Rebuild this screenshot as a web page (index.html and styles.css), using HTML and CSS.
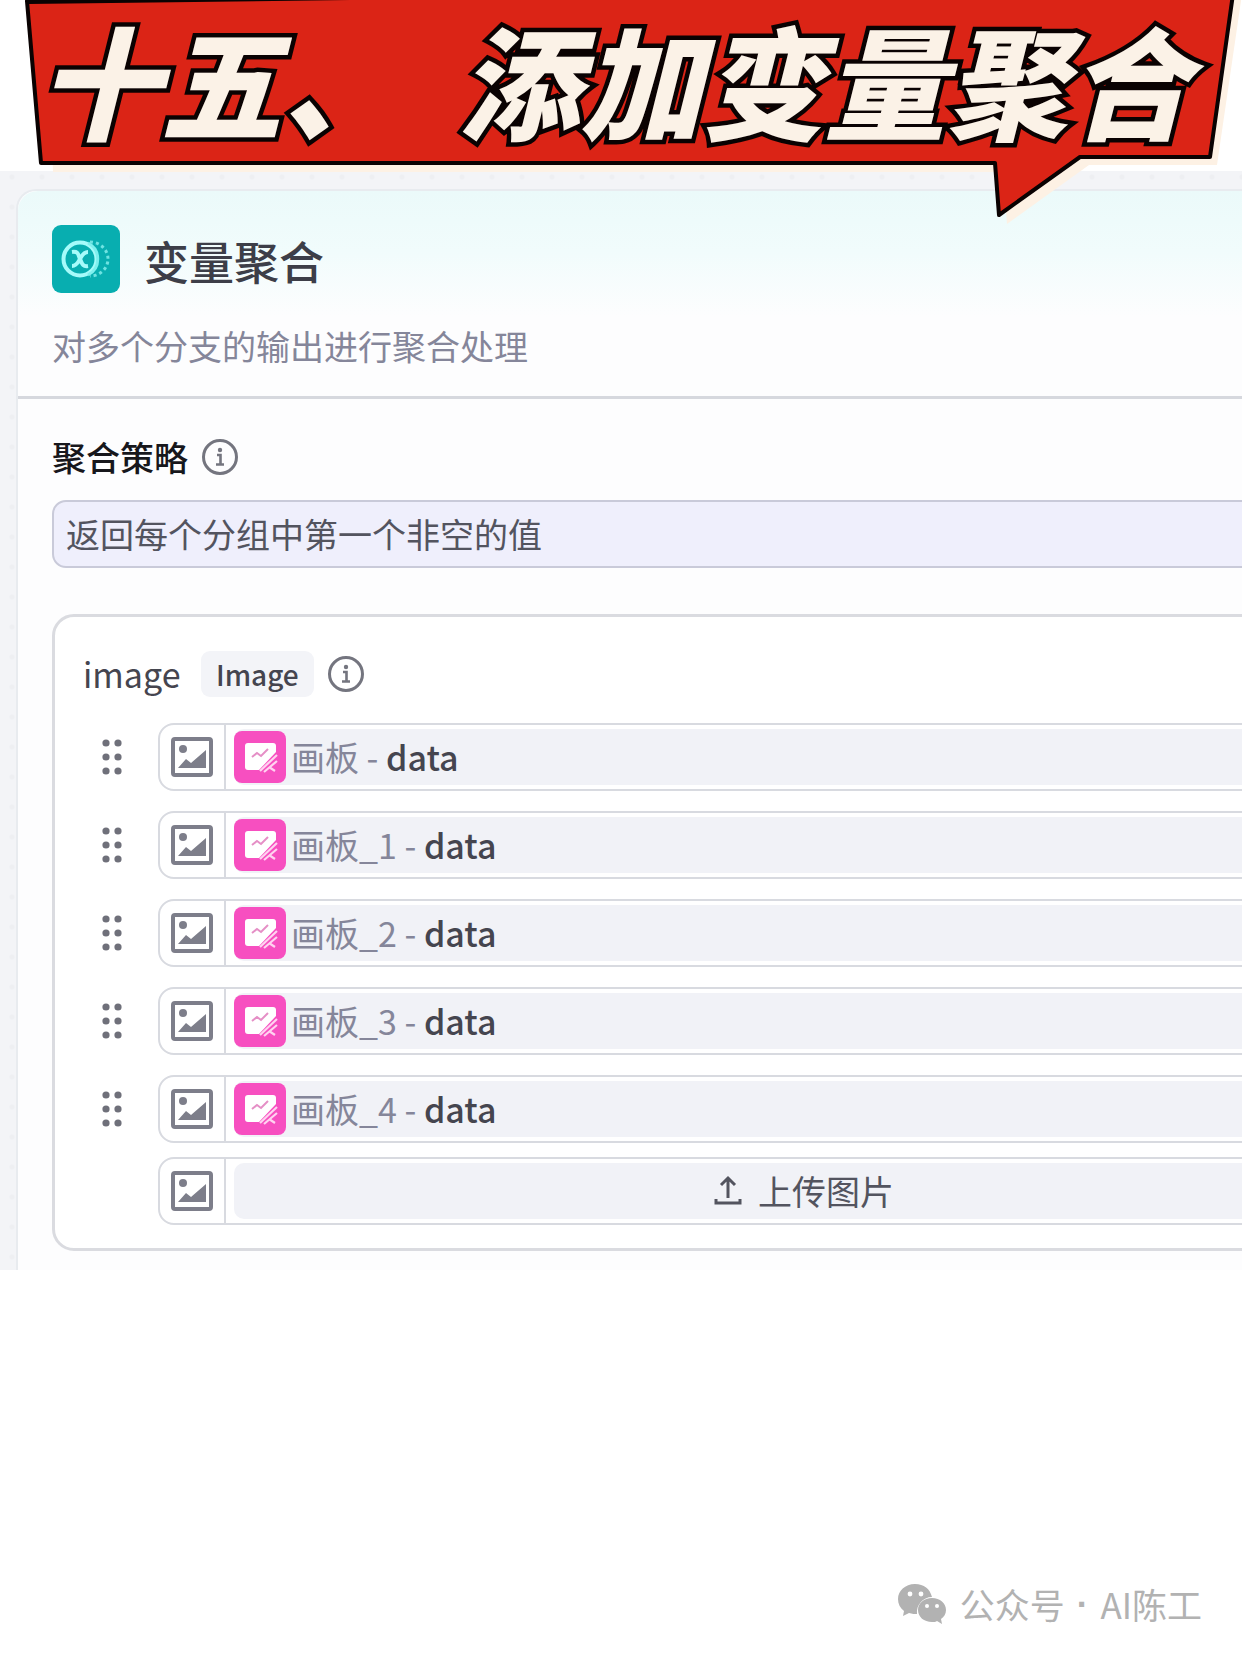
FILE: index.html
```html
<!DOCTYPE html>
<html lang="zh-CN">
<head>
    <meta charset="UTF-8">
    <meta name="viewport" content="width=device-width, initial-scale=1.0">
    <title>添加变量聚合</title>
    <link rel="stylesheet" href="styles.css">
</head>
<body>
    <!-- shared icons -->
    <svg width="0" height="0" class="sprite" aria-hidden="true">
        <symbol id="info" viewBox="0 0 38 38">
            <circle cx="19" cy="19" r="16.5" fill="none" stroke="currentColor" stroke-width="3"/>
            <circle cx="19" cy="12" r="2.2" fill="currentColor"/>
            <path d="M16 17h3.5v9M15 26.5h8" fill="none" stroke="currentColor" stroke-width="2.6"/>
        </symbol>
        <symbol id="drag" viewBox="0 0 20 36">
            <g fill="currentColor">
                <circle cx="4" cy="4" r="3.6"/><circle cx="16" cy="4" r="3.6"/>
                <circle cx="4" cy="18" r="3.6"/><circle cx="16" cy="18" r="3.6"/>
                <circle cx="4" cy="32" r="3.6"/><circle cx="16" cy="32" r="3.6"/>
            </g>
        </symbol>
        <symbol id="picture" viewBox="0 0 42 40">
            <rect x="2" y="2" width="38" height="36" rx="2" fill="none" stroke="currentColor" stroke-width="4"/>
            <circle cx="12" cy="12" r="4" fill="currentColor"/>
            <path d="M7 31l8-9 5 4 15-13v18z" fill="currentColor"/>
        </symbol>
        <symbol id="board" viewBox="0 0 52 52">
            <rect width="52" height="52" rx="8" fill="#f74fc0"/>
            <path d="M14 12h25a3 3 0 0 1 3 3v6L25 39H14a3 3 0 0 1-3-3V15a3 3 0 0 1 3-3z" fill="#fff"/>
            <path d="M18 26l5-4 4 3 7-7" fill="none" stroke="#e58fc6" stroke-width="2"/>
            <path d="M26 40l17-16M30 41l13-11M35 36l6 4" fill="none" stroke="#ffd3f0" stroke-width="2.2"/>
        </symbol>
    </svg>

    <header class="banner">
        <svg class="bubble" viewBox="0 0 1242 230" aria-hidden="true">
            <path d="M47 -6L53 172H1003L1007 224L1089 165H1217L1242 -6z" fill="#fdf1e4"/>
            <path d="M27 1L41 163H995L999 215L1080 157H1210L1233 -6H350z" fill="#db2416" stroke="#0a0202" stroke-width="4" stroke-linejoin="round"/>
            <path d="M26 0H350L28 4z" fill="#0a0202"/>
        </svg>
        <h1><span>十五、</span><span>添加变量聚合</span></h1>
    </header>

    <main class="canvas">
        <section class="node">
            <div class="node-head">
                <div class="node-title">
                    <svg class="node-icon" viewBox="0 0 68 68" aria-hidden="true">
                        <rect width="68" height="68" rx="9" fill="#08aeb0"/>
                        <circle cx="28" cy="34" r="16.5" fill="none" stroke="#a5fbfa" stroke-width="4"/>
                        <path d="M20 27c7-1 6 3 8 7s2 8 8 7M36 27c-5 0-6 4-8 7s-3 7-8 7" fill="none" stroke="#a5fbfa" stroke-width="4"/>
                        <path d="M36 18a18 18 0 0 1 0 32" fill="none" stroke="#7ff0ee" stroke-width="3"/>
                        <path d="M38 17a18 17 0 0 1 0 34" fill="none" stroke="#6fe3e2" stroke-width="3" stroke-dasharray="3 3"/>
                    </svg>
                    <h2>变量聚合</h2>
                </div>
                <p>对多个分支的输出进行聚合处理</p>
            </div>

            <div class="node-body">
                <div class="label-row">
                    <label for="strategy">聚合策略</label>
                    <svg class="info"><use href="#info"/></svg>
                </div>
                <select id="strategy" class="strategy">
                    <option>返回每个分组中第一个非空的值</option>
                </select>

                <div class="group">
                    <div class="group-head">
                        <span class="group-name">image</span>
                        <span class="tag">Image</span>
                        <svg class="info"><use href="#info"/></svg>
                    </div>
                    <ul class="vars">
                        <li>
                            <button class="drag" aria-label="排序"><svg><use href="#drag"/></svg></button>
                            <div class="var">
                                <span class="type"><svg><use href="#picture"/></svg></span>
                                <button class="value"><svg><use href="#board"/></svg><span>画板 - <b>data</b></span></button>
                            </div>
                        </li>
                        <li>
                            <button class="drag" aria-label="排序"><svg><use href="#drag"/></svg></button>
                            <div class="var">
                                <span class="type"><svg><use href="#picture"/></svg></span>
                                <button class="value"><svg><use href="#board"/></svg><span>画板_1 - <b>data</b></span></button>
                            </div>
                        </li>
                        <li>
                            <button class="drag" aria-label="排序"><svg><use href="#drag"/></svg></button>
                            <div class="var">
                                <span class="type"><svg><use href="#picture"/></svg></span>
                                <button class="value"><svg><use href="#board"/></svg><span>画板_2 - <b>data</b></span></button>
                            </div>
                        </li>
                        <li>
                            <button class="drag" aria-label="排序"><svg><use href="#drag"/></svg></button>
                            <div class="var">
                                <span class="type"><svg><use href="#picture"/></svg></span>
                                <button class="value"><svg><use href="#board"/></svg><span>画板_3 - <b>data</b></span></button>
                            </div>
                        </li>
                        <li>
                            <button class="drag" aria-label="排序"><svg><use href="#drag"/></svg></button>
                            <div class="var">
                                <span class="type"><svg><use href="#picture"/></svg></span>
                                <button class="value"><svg><use href="#board"/></svg><span>画板_4 - <b>data</b></span></button>
                            </div>
                        </li>
                    </ul>
                    <div class="var upload-row">
                        <span class="type"><svg><use href="#picture"/></svg></span>
                        <button class="upload">
                            <svg viewBox="0 0 28 32" aria-hidden="true">
                                <path d="M14 23V4M7 10l7-7 7 7M2 24v4h24v-4" fill="none" stroke="currentColor" stroke-width="3"/>
                            </svg>
                            上传图片
                        </button>
                    </div>
                </div>
            </div>
        </section>
    </main>

    <footer class="account">
        <svg viewBox="0 0 50 40" aria-hidden="true">
            <path d="M17 0C7 0 0 7 0 15c0 5 2 9 6 12l-1 5 6-3c3 1 6 1 8 1-1-9 6-17 15-17C32 5 26 0 17 0z" fill="#b2b2b2"/>
            <path d="M34 14c-8 0-14 5-14 12s6 12 14 12c2 0 4 0 5-1l5 3-1-5c3-2 5-5 5-9 0-7-6-12-14-12z" fill="#b2b2b2"/>
            <g fill="#fff">
                <circle cx="12" cy="10" r="2.4"/><circle cx="23" cy="10" r="2.4"/>
                <circle cx="29" cy="22" r="2"/><circle cx="39" cy="22" r="2"/>
            </g>
        </svg>
        <span>公众号</span>
        <b class="dot">·</b>
        <span>AI陈工</span>
    </footer>
</body>
</html>
```
FILE: styles.css
```css
* { box-sizing: border-box; }
body {
    margin: 0;
    min-height: 100vh;
    display: flex;
    flex-direction: column;
    background: #fff;
    color: #45454f;
    font-family: "Noto Sans CJK SC", sans-serif;
    font-size: 34px;
    line-height: 48px;
    overflow-x: hidden;
}
h1, h2, p, ul { margin: 0; padding: 0; }
button, select { font: inherit; color: inherit; border: 0; background: none; padding: 0; margin: 0; }
svg { display: block; flex: none; }
.sprite { position: absolute; }

/* title bubble, its tail hangs over the canvas */
.banner { position: relative; z-index: 1; height: 171px; }
.bubble { position: absolute; top: 0; left: 0; width: 100%; }
.banner h1 {
    position: relative;
    display: flex;
    justify-content: space-between;
    padding: 0 52px 0 38px;
    font-size: 122px;
    line-height: 156px;
    font-weight: 900;
    font-style: italic;
    white-space: nowrap;
    color: #fbf2e7;
    -webkit-text-stroke: 9px #0a0202;
    paint-order: stroke fill;
}

.canvas {
    padding: 18px 0 0 16px;
    overflow: hidden;
    background: #f3f4f7 radial-gradient(circle, #eeeff2 2px, transparent 3px) -3px -9px / 30px 30px;
}
/* the node is wider than the visible canvas */
.node {
    margin-right: -207px;
    border: 2px solid #e8ebef;
    border-bottom: 0;
    border-radius: 20px 20px 0 0;
    background: #fdfdfe;
}
.node-head {
    height: 208px;
    padding: 34px 34px 0;
    border-bottom: 3px solid #d6d8de;
    border-radius: 20px 20px 0 0;
    background: linear-gradient(#ebfafa, #f1fcfc 60px, #fdfdfe 126px);
}
.node-title { display: flex; align-items: center; gap: 24px; }
.node-icon { width: 68px; height: 68px; }
h2 { padding-top: 4px; font-size: 45px; font-weight: 500; line-height: 64px; color: #3d3e48; }
.node-head p { margin-top: 29px; color: #85869a; }

.node-body { padding: 34px 34px 19px; }
.label-row { display: flex; align-items: center; gap: 13px; color: #17171c; }
.label-row label { font-weight: 500; }
.info { width: 38px; height: 38px; color: #74757f; }
.strategy {
    display: block;
    width: 100%;
    height: 68px;
    margin-top: 19px;
    padding: 0 12px;
    appearance: none;
    border: 2px solid #c9cad9;
    border-radius: 14px;
    background: #efeffc;
    color: #53545f;
}

.group {
    margin-top: 46px;
    padding: 33px 30px 23px 28px;
    border: 3px solid #dadbe0;
    border-radius: 22px;
    background: #fff;
}
.group-head { display: flex; align-items: center; height: 48px; }
.group-name { width: 118px; }
.tag {
    padding: 0 15px;
    margin-right: 13px;
    border-radius: 9px;
    background: #f3f4f8;
    font-size: 28px;
    font-weight: 500;
    line-height: 46px;
}
.vars { list-style: none; margin-top: 25px; display: grid; gap: 20px; }
.vars li { display: flex; align-items: center; }
.drag { width: 75px; padding-left: 19px; color: #6f707a; }
.drag svg { width: 20px; height: 36px; }
.var {
    flex: 1;
    display: flex;
    height: 68px;
    overflow: hidden;
    border: 2px solid #d8dae0;
    border-radius: 16px;
    background: #fff;
}
.type {
    width: 66px;
    display: flex;
    align-items: center;
    padding-left: 11px;
    border-right: 2px solid #d8dae0;
    color: #7d7e8a;
}
.type svg { width: 42px; height: 40px; }
.value, .upload { flex: 1; display: flex; align-items: center; margin: 4px 4px 4px 8px; border-radius: 10px; background: #f1f2f7; }
.value { gap: 5px; color: #85869a; white-space: pre; }
.value svg { width: 52px; height: 52px; }
.value b { font-weight: 500; color: #45454f; }
.upload-row { margin: 14px 0 0 75px; }
.upload { justify-content: center; gap: 16px; color: #53545f; }
.upload svg { width: 28px; height: 32px; }

.account {
    margin-top: auto;
    padding: 0 40px 28px;
    display: flex;
    align-items: center;
    justify-content: flex-end;
    gap: 12px;
    font-size: 35px;
    color: #b2b2b2;
}
.account svg { width: 50px; height: 40px; }
.dot { font-family: "Liberation Sans", sans-serif; }
```
